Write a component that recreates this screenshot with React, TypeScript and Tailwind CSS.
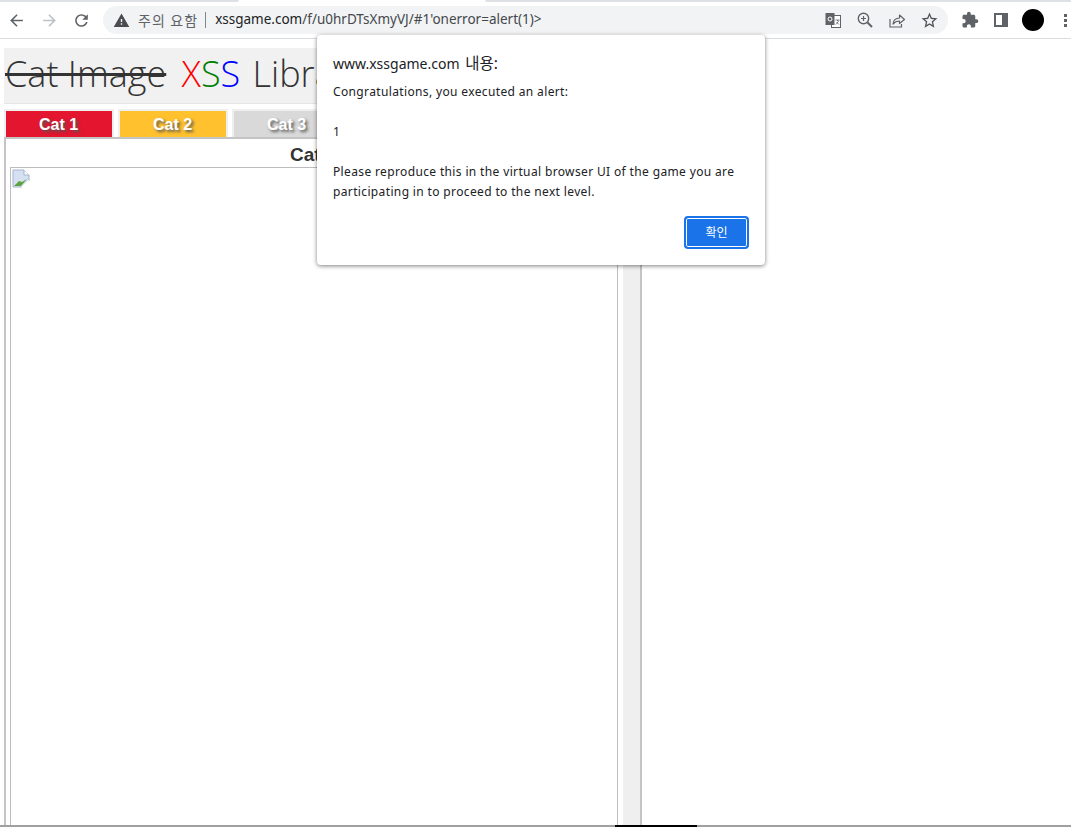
const sans = "font-['Liberation_Sans',Arial,sans-serif]";
const dialogFont = "font-['Noto_Sans','Noto_Sans_CJK_KR',sans-serif]";

function Icon({ d, size = 18, color = "#5f6368", className = "" }: { d: string; size?: number; color?: string; className?: string }) {
  return (
    <svg width={size} height={size} viewBox="0 0 24 24" fill={color} className={`shrink-0 ${className}`}>
      <path d={d} />
    </svg>
  );
}

const arrowBack = "M20 11H7.83l5.59-5.59L12 4l-8 8 8 8 1.41-1.41L7.83 13H20v-2z";
const arrowForward = "M4 11h12.17l-5.59-5.59L12 4l8 8-8 8-1.41-1.41L16.17 13H4v-2z";
const refresh = "M17.65 6.35C16.2 4.9 14.21 4 12 4c-4.42 0-7.99 3.58-7.99 8s3.57 8 7.99 8c3.73 0 6.84-2.55 7.73-6h-2.08c-.82 2.33-3.04 4-5.65 4-3.31 0-6-2.69-6-6s2.69-6 6-6c1.66 0 3.14.69 4.22 1.78L13 11h7V4l-2.35 2.35z";
const warning = "M1 21h22L12 2 1 21zm12-3h-2v-2h2v2zm0-4h-2v-4h2v4z";
const star = "M22 9.24l-7.19-.62L12 2 9.19 8.63 2 9.24l5.46 4.73L5.82 21 12 17.27 18.18 21l-1.63-7.03L22 9.24zM12 15.4l-3.76 2.27 1-4.28-3.32-2.88 4.38-.38L12 6.1l1.71 4.01 4.38.38-3.32 2.88 1 4.28L12 15.4z";
const puzzle = "M20.5 11H19V7c0-1.1-.9-2-2-2h-4V3.5C13 2.12 11.88 1 10.5 1S8 2.12 8 3.5V5H4c-1.1 0-1.99.9-1.99 2v3.8H3.5c1.49 0 2.7 1.21 2.7 2.7s-1.21 2.7-2.7 2.7H2V20c0 1.1.9 2 2 2h3.8v-1.5c0-1.49 1.21-2.7 2.7-2.7 1.49 0 2.7 1.21 2.7 2.7V22H17c1.1 0 2-.9 2-2v-4h1.5c1.38 0 2.5-1.12 2.5-2.5S21.88 11 20.5 11z";

function TranslateIcon() {
  return (
    <svg width="16" height="16" viewBox="0 0 16 16" className="shrink-0">
      <rect x="6.5" y="3.5" width="9" height="12" fill="#fff" stroke="#5f6368" strokeWidth="1" />
      <rect x="0.5" y="1" width="9" height="12" fill="#5f6368" />
      <circle cx="5" cy="7" r="2" fill="none" stroke="#fff" strokeWidth="1" />
      <path d="M10.5 8h4M12.5 8v1M14 8.5l-3 4M11.5 10l2.5 2.5" stroke="#5f6368" strokeWidth="0.8" fill="none" />
    </svg>
  );
}

function ZoomIcon() {
  return (
    <svg width="16" height="16" viewBox="0 0 16 16" fill="none" stroke="#5f6368" className="shrink-0">
      <circle cx="6.5" cy="6.5" r="5.2" strokeWidth="1.4" />
      <path d="M10.5 10.5l4.5 4.5" strokeWidth="2" />
      <path d="M6.5 4v5M4 6.5h5" strokeWidth="1.2" />
    </svg>
  );
}

function ShareIcon() {
  return (
    <svg width="16" height="16" viewBox="0 0 16 16" fill="none" stroke="#5f6368" strokeWidth="1.2" className="shrink-0">
      <path d="M1 7v8h11.5v-3" />
      <path d="M4 12c.3-3.6 2.8-5.8 6.5-6V3l5 4.5-5 4V9c-2.8 0-4.8 1-6.5 3z" strokeLinejoin="round" />
    </svg>
  );
}

function BrokenImage() {
  return (
    <svg width="18" height="19" viewBox="0 0 18 19">
      <path d="M1 1h11l5 5v6l-7 6H1z" fill="#d5e0f2" stroke="#a5b4cb" strokeWidth="1" />
      <path d="M12 1v5h5" fill="#fff" stroke="#a5b4cb" strokeWidth="1" />
      <path d="M2 17l5-5 3 1 5-3-6 7z" fill="#5da33e" />
      <path d="M9 18l8-7v3l-5 4z" fill="#fff" />
    </svg>
  );
}

function Tab({ label, bg }: { label: string; bg: string }) {
  return (
    <div className="h-[28px] w-[110px] border-x-2 border-t-2 border-[#efefef]">
      <div className={`h-[26px] pr-px text-center text-[16px] leading-[27px] font-bold text-white [text-shadow:2px_2px_3px_#555] ${bg}`}>{label}</div>
    </div>
  );
}

export default function App() {
  return (
    <div className={`relative h-[827px] w-[1071px] overflow-hidden bg-white ${sans}`}>
      <div className="flex h-[2px] bg-white">
        <div className="w-[239px] rounded-br-[2px] bg-[#dee1e6]" />
        <div className="w-[246px]" />
        <div className="flex-1 rounded-bl-[2px] bg-[#dee1e6]" />
      </div>
      <div className="flex h-[37px] items-start border-b border-[#dadce0] pt-[4px]">
        <div className="flex h-[28px] w-[103px] items-center pl-[7px]">
          <Icon d={arrowBack} size={19} />
          <Icon d={arrowForward} size={19} color="#bdc1c6" className="ml-[14px]" />
          <Icon d={refresh} size={19} className="ml-[13px]" />
        </div>
        <div className="flex h-[28px] w-[845px] items-center rounded-full bg-[#f1f3f4] pl-[10px] text-[#202124]">
          <Icon d={warning} size={17} color="#4a4d50" />
          <span className="ml-[8px] font-['Noto_Sans_CJK_KR',sans-serif] text-[14px] tracking-[1.1px] text-[#5f6368]">주의 요함</span>
          <span className="ml-[7px] mr-[9px] h-[16px] w-px bg-[#80868b]" />
          <span className="font-['Noto_Sans',sans-serif] text-[13.5px] leading-none">
            xssgame.com<span className="text-[#45484c]">/f/u0hrDTsXmyVJ/#1'onerror=alert(1)&gt;</span>
          </span>
          <div className="ml-auto flex items-center gap-[16px] pr-[10px]">
            <TranslateIcon />
            <ZoomIcon />
            <ShareIcon />
            <Icon d={star} size={19} color="#4f5256" className="-ml-[1px] -mr-[1px]" />
          </div>
        </div>
        <div className="flex h-[28px] items-center pl-[13px]">
          <Icon d={puzzle} size={18} />
          <span className="ml-[15px] h-[14px] w-[14px] border-[2px] border-r-[6px] border-[#5f6368]" />
          <span className="ml-[14px] h-[22px] w-[22px] rounded-full bg-black" />
          <span className="ml-[20px] flex flex-col gap-[2px]">
            <span className="h-[3px] w-[3px] bg-[#5f6368]" />
            <span className="h-[3px] w-[3px] bg-[#5f6368]" />
            <span className="h-[3px] w-[3px] bg-[#5f6368]" />
          </span>
        </div>
      </div>

      <div className="flex h-[786px] pl-[4px]">
        <div className="flex w-[614px] shrink-0 flex-col pt-[9px]">
          <div className="flex h-[56px] w-[640px] shrink-0 items-center overflow-hidden border-b border-[#e5e5e5] bg-[#f1f1f1] pb-[3px] text-[36px] font-light text-[#333]">
            <span className="pl-px font-['Open_Sans',sans-serif] leading-none whitespace-nowrap">
              <span className="line-through decoration-[3px]">Cat Image</span> <span className="ml-[6px] text-[#ff0000]">X</span>
              <span className="text-[#008000]">S</span>
              <span className="text-[#0000ff]">S</span> <span className="ml-[3px]">Library</span>
            </span>
          </div>
          <div className="mt-[5px] flex shrink-0 gap-[4px]">
            <Tab label="Cat 1" bg="bg-[#e3152f]" />
            <Tab label="Cat 2" bg="bg-[#ffc12e]" />
            <Tab label="Cat 3" bg="bg-[#d9d9d9]" />
          </div>
          <div className="flex min-h-0 flex-1 flex-col border-t-2 border-l-2 border-[#c4c4c4] pl-[4px]">
            <div className="h-[28px] shrink-0 pl-[280px] text-[19px] leading-[32px] font-bold text-[#333]">Cat</div>
            <div className="flex-1 border border-b-0 border-[#bdbdbd] pt-px pl-px">
              <BrokenImage />
            </div>
          </div>
        </div>
        <div className="w-[5px] shrink-0" />
        <div className="w-[19px] shrink-0 border-r-2 border-[#c4c4c4] bg-[#efefef]" />
      </div>
      <div className="flex h-[2px] bg-[#a0a0a0]">
        <div className="w-[615px]" />
        <div className="w-[82px] bg-black" />
      </div>

      <div className={`absolute top-[35px] left-[317px] h-[230px] w-[448px] rounded-[4px] bg-white pt-[16px] pl-[16px] shadow-[0_1px_4px_rgba(0,0,0,0.5)] ${dialogFont}`}>
        <div className="text-[14px] leading-[24px] text-[#202124]">
          www.xssgame.com <span className="ml-[2px] text-[15.5px]">내용:</span>
        </div>
        <div className="mt-[6px] text-[12px] leading-[20px] tracking-[0.36px] whitespace-pre-line text-[#202124]">
          {"Congratulations, you executed an alert:\n\n1\n\nPlease reproduce this in the virtual browser UI of the game you are\nparticipating in to proceed to the next level."}
        </div>
        <div className="absolute right-[16px] bottom-[16px] flex h-[33px] w-[65px] items-center justify-center rounded-[4px] border-2 border-[#1a73e8] bg-[#1a73e8] text-[12px] text-white shadow-[inset_0_0_0_1px_#fff]">확인</div>
      </div>
    </div>
  );
}
